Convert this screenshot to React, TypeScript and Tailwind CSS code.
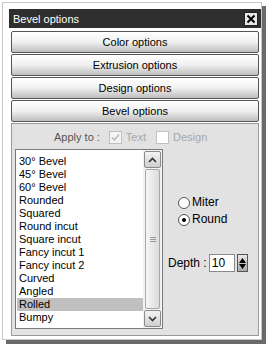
import React from "react";

const items = [
  "30° Bevel",
  "45° Bevel",
  "60° Bevel",
  "Rounded",
  "Squared",
  "Round incut",
  "Square incut",
  "Fancy incut 1",
  "Fancy incut 2",
  "Curved",
  "Angled",
  "Rolled",
  "Bumpy",
];

function Btn({ label }: { label: string }) {
  return (
    <div className="h-[22px] flex items-center justify-center border border-[#555] rounded-[2px] bg-gradient-to-b from-[#ffffff] via-[#f0f0f0] to-[#bebebe] text-[11px] text-black pt-[1px]">
      {label}
    </div>
  );
}

export default function App() {
  return (
    <div className="w-[269px] h-[348px] bg-white relative" style={{ fontFamily: '"Liberation Sans", Arial, sans-serif' }}>
      <div className="absolute left-[2px] top-[2px] w-[260px] h-[338px] bg-white border border-[#c8c8c8] shadow-[4px_4px_0_#6a6a6a]">
        <div className="ml-[6px] mt-[6px] w-[252px] flex flex-col">
          <div className="h-[19px] bg-[#2f2f2f] flex items-center justify-between pl-[4px] pr-[3px]">
            <span className="text-white text-[11px] pt-[1px]">Bevel options</span>
            <div className="w-[14px] h-[14px] bg-[#e8e8e8] border border-[#222] flex items-center justify-center">
              <svg width="10" height="10" viewBox="0 0 10 10">
                <path d="M1.5 1.5 L8.5 8.5 M8.5 1.5 L1.5 8.5" stroke="#000" strokeWidth="2" />
              </svg>
            </div>
          </div>
          <div className="px-[2px] pt-[3px] flex flex-col gap-[1px] bg-white">
            <Btn label="Color options" />
            <Btn label="Extrusion options" />
            <Btn label="Design options" />
            <Btn label="Bevel options" />
          </div>
          <div className="mx-[2px] mt-[1px] h-[213px] bg-[#e2e2e2] border border-[#9a9a9a] flex flex-col">
            <div className="h-[25px] flex items-center pl-[42px] text-[11px] pt-[1px]">
              <span className="text-[#555]">Apply to :</span>
              <span className="ml-[9px] w-[13px] h-[13px] bg-[#f4f4f4] border border-[#c0c0c0] flex items-center justify-center">
                <svg width="9" height="9" viewBox="0 0 9 9">
                  <path d="M1 4.5 L3.5 7 L8 1.5" stroke="#b8b8b8" strokeWidth="1.5" fill="none" />
                </svg>
              </span>
              <span className="ml-[4px] text-[#a8a8a8]">Text</span>
              <span className="ml-[10px] w-[13px] h-[13px] bg-white border border-[#c0c0c0]" />
              <span className="ml-[4px] text-[#a8a8a8]">Design</span>
            </div>
            <div className="flex pl-[3px]">
              <div className="w-[148px] h-[180px] bg-white border border-[#7a7a7a] flex">
                <div className="flex-1 pt-[5px] pl-[1px] text-[11px] text-black leading-[13px]">
                  {items.map((it) => (
                    <div key={it} className={"pl-[2px] h-[13px] " + (it === "Rolled" ? "bg-[#c0c0c0]" : "")}>
                      {it}
                    </div>
                  ))}
                </div>
                <div className="w-[19px] flex flex-col p-[1px] bg-[#f2f2f2]">
                  <div className="h-[17px] border border-[#8a8a8a] rounded-[2px] bg-gradient-to-b from-[#f4f4f4] to-[#cfcfcf] flex items-center justify-center">
                    <svg width="9" height="6" viewBox="0 0 9 6"><path d="M1 5 L4.5 1.5 L8 5" stroke="#333" strokeWidth="1.6" fill="none" /></svg>
                  </div>
                  <div className="flex-1 my-[1px] mx-[1px] border border-[#a8a8a8] rounded-[2px] bg-gradient-to-r from-[#f6f6f6] to-[#dcdcdc] flex items-center justify-center">
                    <div className="flex flex-col gap-[1px]">
                      <div className="w-[6px] h-[1px] bg-[#9a9a9a]" />
                      <div className="w-[6px] h-[1px] bg-[#9a9a9a]" />
                      <div className="w-[6px] h-[1px] bg-[#9a9a9a]" />
                    </div>
                  </div>
                  <div className="h-[17px] border border-[#8a8a8a] rounded-[2px] bg-gradient-to-b from-[#f4f4f4] to-[#cfcfcf] flex items-center justify-center">
                    <svg width="9" height="6" viewBox="0 0 9 6"><path d="M1 1 L4.5 4.5 L8 1" stroke="#333" strokeWidth="1.6" fill="none" /></svg>
                  </div>
                </div>
              </div>
              <div className="flex-1 flex flex-col">
                <div className="mt-[45px] ml-[15px] flex flex-col text-[11px] leading-[17px]">
                  <div className="flex items-center gap-[2px] h-[17px]">
                    <span className="w-[12px] h-[12px] rounded-full border border-[#555] bg-white" />
                    <span className="text-[12px]">Miter</span>
                  </div>
                  <div className="flex items-center gap-[2px] h-[17px]">
                    <span className="w-[12px] h-[12px] rounded-full border border-[#555] bg-white flex items-center justify-center">
                      <span className="w-[4px] h-[4px] rounded-full bg-black" />
                    </span>
                    <span className="text-[12px]">Round</span>
                  </div>
                </div>
                <div className="mt-[26px] ml-[5px] flex items-center text-[12px] h-[18px]">
                  <span>Depth :</span>
                  <span className="ml-[2px] w-[26px] h-[18px] bg-white border border-[#8a8a8a] pl-[2px] flex items-center">10</span>
                  <span className="ml-[2px] w-[11px] h-[18px] border border-[#555] bg-gradient-to-b from-[#e8e8e8] to-[#a8a8a8] flex flex-col items-center justify-center gap-[1px]">
                    <svg width="7" height="5" viewBox="0 0 7 5"><path d="M0 5 L3.5 0 L7 5 Z" fill="#000" /></svg>
                    <svg width="7" height="5" viewBox="0 0 7 5"><path d="M0 0 L3.5 5 L7 0 Z" fill="#000" /></svg>
                  </span>
                </div>
              </div>
            </div>
          </div>
        </div>
      </div>
    </div>
  );
}
